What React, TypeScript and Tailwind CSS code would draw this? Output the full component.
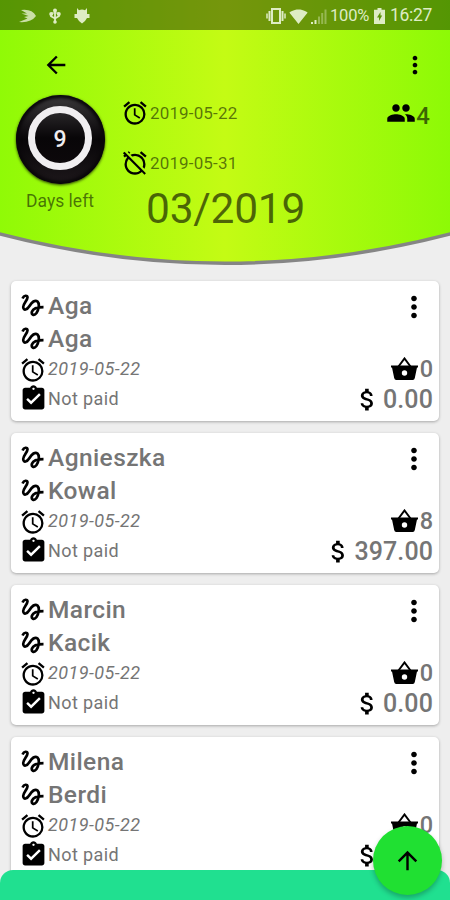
import {
  MdAlarm,
  MdAlarmOff,
  MdArrowBack,
  MdArrowUpward,
  MdAssignmentTurnedIn,
  MdAttachMoney,
  MdGroup,
  MdMoreVert,
  MdSignalWifi4Bar,
} from "react-icons/md";

type Client = {
  firstName: string;
  lastName: string;
  date: string;
  items: number;
  total: string;
};

const clients: Client[] = [
  { firstName: "Aga", lastName: "Aga", date: "2019-05-22", items: 0, total: "0.00" },
  { firstName: "Agnieszka", lastName: "Kowal", date: "2019-05-22", items: 8, total: "397.00" },
  { firstName: "Marcin", lastName: "Kacik", date: "2019-05-22", items: 0, total: "0.00" },
  { firstName: "Milena", lastName: "Berdi", date: "2019-05-22", items: 0, total: "0.00" },
];

const SignatureIcon = () => (
  <svg className="ml-[2px] mr-[4px]" width="23" height="23" viewBox="0 0 23 23" fill="none" stroke="#000" strokeWidth="2.700">
    <path d="M1.500 4.500C3 1.300 6.500 0.800 6.500 3.500C6.500 6 2 10 2.200 13C2.500 17 6 16 8.500 12C11 8 14 5.500 16.500 7.500C19 10 17.500 16 15.500 19C13 22.500 10 20.500 11 17.500C12.500 13.700 17 13.200 22.500 13.200" />
  </svg>
);

const BasketIcon = () => (
  <svg className="mb-[3px] ml-auto mr-[2px]" width="27" height="23" viewBox="0 0 27 23">
    <path d="M7.500 9.500L13.500 1.500L19.500 9.500" fill="none" stroke="#000" strokeWidth="2" />
    <path d="M0 8.500H27V10.500H26L23.800 21Q23.400 23 21.800 23H5.200Q3.600 23 3.200 21L1 10.500H0Z" />
    <circle cx="13.500" cy="16" r="2.700" fill="#fff" />
  </svg>
);

const StatusBar = () => (
  <div className="flex h-[30px] items-center bg-black/40 pl-[19px] pr-[18px] pt-[2px] text-[#deecc4]">
    <svg width="18" height="14" viewBox="0 0 18 14" fill="currentColor">
      <path d="M2 1Q13 -0.500 17 7Q12 14 0 13L8.500 9.500L5 8L9.500 7L2.500 4.500L8 4.500Z" opacity="0.85" />
    </svg>
    <svg className="ml-[12px]" width="12" height="16" viewBox="0 0 12 16" fill="none" stroke="currentColor" strokeWidth="1.800">
      <path d="M6 2v12M2 5v3.200L6 10.500L10 8V5" />
      <path d="M2.500 5h7" opacity="0.6" />
      <circle cx="6" cy="2.500" r="2" fill="currentColor" stroke="none" />
      <circle cx="2.200" cy="6" r="2" fill="currentColor" stroke="none" />
      <circle cx="9.800" cy="6" r="2" fill="currentColor" stroke="none" />
      <circle cx="6" cy="14" r="1.800" fill="currentColor" stroke="none" />
    </svg>
    <svg className="ml-[13px]" width="16" height="16" viewBox="0 0 16 16" fill="currentColor">
      <path d="M3 0l2 2.200Q8 1 11 2.200L13 0v6h2.500v4H13l-2 3-3 2.500L5 13l-2-3H.5V6H3z" />
    </svg>

    <div className="ml-auto flex items-center">
      <svg width="20" height="16" viewBox="0 0 20 16" fill="none" stroke="currentColor" strokeWidth="2">
        <rect x="6" y="1" width="8" height="14" />
        <path d="M3.500 3v10M16.500 3v10" />
        <path d="M1 5.500v5M19 5.500v5" strokeWidth="1.500" />
      </svg>
      <MdSignalWifi4Bar className="ml-[3px] size-[19px]" />
      <svg className="ml-[2px]" width="17" height="15" viewBox="0 0 17 15" fill="currentColor">
        <path d="M1 15v-2h2v2zM4.500 15v-4h2v4z" />
        <path d="M8 15V7.500h2V15zM11.200 15V4h2v11zM14.500 15V0.500h2V15z" opacity="0.4" />
      </svg>
      <span className="ml-[3px] w-[40px] whitespace-nowrap text-[16.500px] leading-none tracking-[-0.2px]">100%</span>
      <svg className="ml-[4px]" width="11" height="16" viewBox="0 0 11 16">
        <path d="M3.500 0h4v1.800H11V16H0V1.800h3.500z" fill="currentColor" />
        <path d="M6.500 4L3 9.500h2V13l3.200-5.500H6.500z" fill="#5d9409" />
      </svg>
      <span className="ml-[5px] w-[42px] whitespace-nowrap text-[17.500px] leading-none tracking-[-0.3px]">16:27</span>
    </div>
  </div>
);

const DaysLeft = () => (
  <div className="flex w-[90px] flex-col items-center">
    <div className="flex size-[89px] items-center justify-center rounded-full bg-linear-to-b from-[#3c3a3c] via-[#080608] via-50% to-[#1d181b] shadow-[0_1px_3px_rgba(0,0,0,0.8),inset_0_0_3px_3px_#0a080a]">
      <div className="mb-[3px] flex size-[64px] items-center justify-center rounded-full border-[7px] border-[#f0eef0] bg-linear-to-b from-[#282628] via-[#080608] via-50% to-[#0c080b] pt-[5px] text-[23px] font-medium text-[#f0eef0]">
        9
      </div>
    </div>
    <span className="mt-[6px] whitespace-nowrap text-[17.500px] leading-[22px] text-black/55">Days left</span>
  </div>
);

const Header = () => (
  <header className="relative h-[270px]">
    <svg className="absolute inset-0" width="450" height="270" viewBox="0 0 450 270">
      <defs>
        <linearGradient id="lime">
          <stop offset="0" stopColor="#8ffa06" />
          <stop offset="0.5" stopColor="#c4fb14" />
          <stop offset="1" stopColor="#8cfa06" />
        </linearGradient>
      </defs>
      <path d="M-4 -4V233Q225 293.500 454 233V-4Z" fill="url(#lime)" stroke="#858585" strokeWidth="3.500" />
    </svg>

    <div className="relative">
      <StatusBar />
      <div className="flex h-[65px] items-center justify-between pl-[42px] pr-[21px] pt-[5px]">
        <MdArrowBack className="size-[28px]" />
        <MdMoreVert className="size-[28px]" />
      </div>

      <div className="flex pl-[15px]">
        <DaysLeft />
        <div className="ml-[16px] flex flex-col text-[17px] text-black/55">
          <div className="mt-[3px] flex h-[30px] items-center">
            <MdAlarm className="size-[28px] text-black" />
            <span className="ml-px pt-px tracking-[0.15px]">2019-05-22</span>
          </div>
          <div className="mt-[20px] flex h-[30px] items-center">
            <MdAlarmOff className="size-[28px] text-black" />
            <span className="ml-px pt-px tracking-[0.15px]">2019-05-31</span>
          </div>
          <h1 className="ml-[25px] mt-[4px] whitespace-nowrap text-[42.500px] leading-[54px] tracking-[-0.25px] text-black/60">
            03/2019
          </h1>
        </div>
        <div className="ml-auto mr-[20px] mt-px flex h-[34px] items-center">
          <MdGroup className="size-[30px]" />
          <span className="pt-[5px] text-[24px] font-medium text-black/60">4</span>
        </div>
      </div>
    </div>
  </header>
);

const ClientCard = ({ client }: { client: Client }) => (
  <article className="h-[140px] shrink-0 rounded-[5px] bg-white pl-[8px] pr-[6px] pt-[8px] text-[#757575] shadow-[0_1px_3px_rgba(0,0,0,0.3)]">
    <div className="flex h-[33px] items-center">
      <SignatureIcon />
      <span className="pt-px text-[24.500px] font-medium tracking-[0.4px]">{client.firstName}</span>
      <MdMoreVert className="ml-auto mr-[2px] mt-[2px] size-[34px] text-black" />
    </div>
    <div className="flex h-[33px] items-center">
      <SignatureIcon />
      <span className="pt-px text-[24.500px] font-medium tracking-[0.4px]">{client.lastName}</span>
    </div>
    <div className="flex h-[29px] items-center">
      <MdAlarm className="size-[28px] text-black" />
      <span className="ml-px pb-[2px] text-[18px] italic tracking-[0.45px]">{client.date}</span>
      <BasketIcon />
      <span className="text-[23.500px] font-medium">{client.items}</span>
    </div>
    <div className="flex h-[30px] items-center">
      <MdAssignmentTurnedIn className="mb-px size-[29px] text-black" />
      <span className="pb-px text-[18px] tracking-[0.4px]">Not paid</span>
      <MdAttachMoney className="ml-auto size-[29px] text-black" />
      <span className="ml-px pt-px text-[25px] font-medium tracking-[0.1px]">{client.total}</span>
    </div>
  </article>
);

export default function App() {
  return (
    <div className="relative flex h-[900px] w-[450px] flex-col overflow-hidden bg-[#eeeeee] font-[Roboto,sans-serif]">
      <Header />
      <main className="flex flex-col gap-[12px] px-[11px] pt-[11px]">
        {clients.map((client) => (
          <ClientCard key={client.firstName} client={client} />
        ))}
      </main>

      {/* bottom sheet peek + action button */}
      <div className="absolute inset-x-0 bottom-0 h-[30px] rounded-t-[13px] bg-[#20e090]" />
      <button className="absolute bottom-[5px] right-[8px] flex size-[69px] items-center justify-center rounded-full bg-[#20e032] shadow-[0_3px_5px_rgba(0,0,0,0.25)]">
        <MdArrowUpward className="size-[29px]" />
      </button>
    </div>
  );
}
